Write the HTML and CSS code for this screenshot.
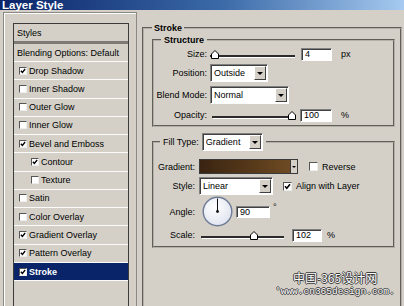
FILE: index.html
```html
<!DOCTYPE html>
<html lang="en">
<head>
    <meta charset="UTF-8">
    <meta name="viewport" content="width=device-width, initial-scale=1.0">
    <title>Layer Style</title>
    <link rel="stylesheet" href="styles.css">
</head>
<body>
<div class="window">
    <!-- title bar -->
    <div class="titlebar"><span class="title-text">Layer Style</span></div>

    <div class="dialog">
        <!-- styles list -->
        <div class="sidebar">
            <ul class="style-list">
                <li class="style-row style-head">Styles</li>
                <li class="style-row style-blend">Blending Options: Default</li>
                <li class="style-row"><span class="check"><svg viewBox="0 0 7 7"><polyline points="1,3.2 2.8,5.2 6,1.2"/></svg></span>Drop Shadow</li>
                <li class="style-row"><span class="check"></span>Inner Shadow</li>
                <li class="style-row"><span class="check"></span>Outer Glow</li>
                <li class="style-row"><span class="check"></span>Inner Glow</li>
                <li class="style-row"><span class="check"><svg viewBox="0 0 7 7"><polyline points="1,3.2 2.8,5.2 6,1.2"/></svg></span>Bevel and Emboss</li>
                <li class="style-row style-sub"><span class="check"><svg viewBox="0 0 7 7"><polyline points="1,3.2 2.8,5.2 6,1.2"/></svg></span>Contour</li>
                <li class="style-row style-sub"><span class="check"></span>Texture</li>
                <li class="style-row"><span class="check"></span>Satin</li>
                <li class="style-row"><span class="check"></span>Color Overlay</li>
                <li class="style-row"><span class="check"><svg viewBox="0 0 7 7"><polyline points="1,3.2 2.8,5.2 6,1.2"/></svg></span>Gradient Overlay</li>
                <li class="style-row"><span class="check"><svg viewBox="0 0 7 7"><polyline points="1,3.2 2.8,5.2 6,1.2"/></svg></span>Pattern Overlay</li>
                <li class="style-row selected"><span class="check"><svg viewBox="0 0 7 7"><polyline points="1,3.2 2.8,5.2 6,1.2"/></svg></span>Stroke</li>
            </ul>
        </div>

        <!-- stroke settings -->
        <div class="panel">
            <fieldset class="group group-stroke">
                <legend>Stroke</legend>

                <fieldset class="group group-structure">
                    <legend>Structure</legend>
                    <div class="field field-size">
                        <span class="field-label">Size:</span>
                        <svg class="slider" width="85" height="10">
                            <rect x="0" y="6" width="85" height="2" fill="#2b2b2b"/>
                            <rect x="1" y="8" width="84" height="1" fill="#fff"/>
                            <polygon points="1.5,9.5 1.5,5 5,1.5 8.5,5 8.5,9.5" fill="#fff" stroke="#000"/>
                        </svg>
                        <span class="num-input size-input">4</span>
                        <span class="unit">px</span>
                    </div>
                    <div class="field field-position">
                        <span class="field-label">Position:</span>
                        <div class="select position-select"><span class="select-value">Outside</span><span class="select-btn"></span></div>
                    </div>
                    <div class="field field-blend">
                        <span class="field-label">Blend Mode:</span>
                        <div class="select blend-select"><span class="select-value">Normal</span><span class="select-btn"></span></div>
                    </div>
                    <div class="field field-opacity">
                        <span class="field-label">Opacity:</span>
                        <svg class="slider opacity-slider" width="84" height="10">
                            <rect x="0" y="6" width="84" height="2" fill="#2b2b2b"/>
                            <rect x="1" y="8" width="83" height="1" fill="#fff"/>
                            <polygon points="76.5,9.5 76.5,5 80,1.5 83.5,5 83.5,9.5" fill="#fff" stroke="#000"/>
                        </svg>
                        <span class="num-input opacity-input">100</span>
                        <span class="unit">%</span>
                    </div>
                </fieldset>

                <fieldset class="group group-fill">
                    <legend>
                        <span class="legend-label">Fill Type:</span>
                        <div class="select fill-select"><span class="select-value">Gradient</span><span class="select-btn"></span></div>
                    </legend>
                    <div class="field field-gradient">
                        <span class="field-label">Gradient:</span>
                        <div class="gradient-pick"><span class="gradient-swatch"></span><span class="mini-btn"></span></div>
                        <span class="box-check reverse-check"></span>
                        <span class="check-text">Reverse</span>
                    </div>
                    <div class="field field-style">
                        <span class="field-label">Style:</span>
                        <div class="select style-select"><span class="select-value">Linear</span><span class="select-btn"></span></div>
                        <span class="box-check align-check"><svg viewBox="0 0 7 7"><polyline points="1,3.2 2.8,5.2 6,1.2"/></svg></span>
                        <span class="check-text">Align with Layer</span>
                    </div>
                    <div class="field field-angle">
                        <span class="field-label">Angle:</span>
                        <svg class="dial" width="31" height="31">
                            <defs>
                                <radialGradient id="dialFace" cx="40%" cy="35%" r="70%">
                                    <stop offset="0" stop-color="#ffffff"/>
                                    <stop offset="1" stop-color="#dfe3ef"/>
                                </radialGradient>
                            </defs>
                            <circle cx="15.5" cy="15.5" r="14.3" fill="url(#dialFace)" stroke="#6d7b96" stroke-width="1.4"/>
                            <line x1="15.5" y1="15.5" x2="15.5" y2="2.5" stroke="#111" stroke-width="1"/>
                            <circle cx="15.5" cy="15.5" r="1.4" fill="#111"/>
                        </svg>
                        <span class="num-input angle-input">90</span>
                        <span class="degree">°</span>
                    </div>
                    <div class="field field-scale">
                        <span class="field-label">Scale:</span>
                        <svg class="slider scale-slider" width="83" height="10">
                            <rect x="0" y="6" width="83" height="2" fill="#2b2b2b"/>
                            <rect x="1" y="8" width="82" height="1" fill="#fff"/>
                            <polygon points="49.5,9.5 49.5,5 53,1.5 56.5,5 56.5,9.5" fill="#fff" stroke="#000"/>
                        </svg>
                        <span class="num-input scale-input">102</span>
                        <span class="unit scale-unit">%</span>
                    </div>
                </fieldset>
            </fieldset>
        </div>
    </div>

    <!-- 水印 -->
    <div class="watermark">
        <div class="wm-cn">中国-365设计网</div>
        <div class="wm-url">'www.cn365design.com.</div>
    </div>
</div>
</body>
</html>
```

FILE: styles.css
```css
/* base */
* { margin: 0; padding: 0; box-sizing: border-box; }
body { width: 404px; height: 306px; overflow: hidden; background: #d4d0c8; color: #000; font-family: 'Liberation Sans', Arial, sans-serif; font-size: 9px; line-height: 10px; }
.window { position: relative; height: 306px; overflow: hidden; }

/* title bar */
.titlebar { position: relative; z-index: 1; height: 10px; background: linear-gradient(to right, #0a246a, #3b6aa8 55%, #a6caf0); }
.title-text { display: block; margin-left: 2px; color: #fff; font-size: 11.5px; font-weight: 700; line-height: 10px; }

.dialog { display: flex; height: 296px; padding-top: 2px; overflow: hidden; }

/* styles list */
.sidebar { width: 134px; margin-left: 3px; padding: 10px 7px 0 9px; border: 1px solid #8c8984; border-bottom: none; box-shadow: inset 1px 1px 0 #fff; }
.style-list { list-style: none; height: 100%; border: 1px solid #3c3c3c; border-bottom: none; }
.style-row { display: flex; align-items: center; height: 18.27px; padding-left: 5px; border-bottom: 1px solid #fbfbfa; white-space: nowrap; }
.style-head { height: 20px; padding-left: 3px; border-bottom: 3px solid #7e7b76; }
.style-blend { height: 18px; padding-left: 3px; }
.style-sub { padding-left: 17px; }
.style-row.selected { background: #0a246a; color: #fff; font-weight: 700; }

.check { display: flex; width: 8px; height: 8px; margin-right: 2px; background: #fff; border: 1px solid; border-color: #555 #eee #eee #555; }
.check svg, .box-check svg { width: 100%; height: 100%; fill: none; stroke: #000; stroke-width: 1.6; }

/* right panel */
.panel { flex: 1; padding: 11px 2px 0 5px; }
.group { border: 2px groove #b4b0a8; min-width: 0; }
.group > legend { margin-left: 7px; padding: 0 3px; font-weight: 700; line-height: 10px; }
.group-stroke { padding: 0 5px 60px 8px; }
.group-stroke > legend { margin-left: 0; padding: 0 2px; }
.group-structure { margin-top: 2px; padding-bottom: 3px; }
.group-fill { margin-top: 6px; padding-bottom: 4px; }
.group-fill > legend { display: flex; align-items: center; margin-left: 6px; font-weight: 400; }
.legend-label { margin-right: 3px; }

.field { display: flex; align-items: center; }
.field-label { width: 53px; margin-right: 3px; text-align: right; white-space: nowrap; }
.group-fill .field-label { width: 41px; margin-right: 4px; }

.field-size { height: 14px; margin-top: 2px; }
.field-position { height: 18px; margin-top: 3px; }
.field-blend { height: 18px; margin-top: 4px; }
.field-opacity { height: 14px; margin-top: 4px; }
.field-gradient { height: 15px; margin-top: 8px; }
.field-style { height: 18px; margin-top: 3px; }
.field-angle { height: 31px; margin-top: 1px; }
.field-scale { height: 14px; margin-top: 1px; }

/* inputs */
.num-input { height: 13px; padding-left: 3px; background: #fff; border: 1px solid; border-color: #808080 #fff #fff #808080; box-shadow: inset 1px 1px 0 #404040; line-height: 11px; }
.size-input { width: 31px; margin-left: 6px; }
.opacity-input { width: 32px; margin-left: 4px; }
.angle-input { width: 34px; height: 12px; margin-left: 3px; line-height: 10px; }
.scale-input { width: 30px; margin-left: 8px; }
.unit { margin-left: 9px; }
.scale-unit { margin-left: 5px; }
.degree { align-self: flex-start; margin: 6px 0 0 3px; }

.slider { display: block; }
.opacity-slider { margin-left: 2px; }
.scale-slider { margin-left: 2px; }
.dial { display: block; margin-left: 3px; }

/* dropdowns */
.select { display: flex; align-items: center; height: 18px; padding: 1px; background: #fff; border: 1px solid; border-color: #808080 #fff #fff #808080; box-shadow: inset 1px 1px 0 #404040; }
.select-value { flex: 1; padding-left: 2px; white-space: nowrap; }
.select-btn { display: flex; align-items: center; justify-content: center; width: 12px; height: 14px; background: #d4d0c8; border: 1px solid; border-color: #fff #404040 #404040 #fff; }
.select-btn::after { content: ""; border-left: 3px solid transparent; border-right: 3px solid transparent; border-top: 3px solid #000; }
.position-select { width: 58px; }
.blend-select { width: 79px; }
.fill-select { width: 61px; }
.style-select { width: 74px; }

/* gradient picker */
.gradient-pick { display: flex; width: 99px; height: 15px; border: 1px solid #3a3a3a; background: #d4d0c8; }
.gradient-swatch { flex: 1; border-right: 1px solid #3a3a3a; background: linear-gradient(to right, #3a2411, #553819 55%, #6e4b24); }
.mini-btn { display: flex; align-items: center; justify-content: center; width: 6px; }
.mini-btn::after { content: ""; border-left: 2px solid transparent; border-right: 2px solid transparent; border-top: 2px solid #000; }

.box-check { display: flex; width: 9px; height: 9px; background: #fff; border: 1px solid; border-color: #555 #eee #eee #555; }
.reverse-check { margin-left: 11px; }
.align-check { margin-left: 10px; }
.check-text { margin-left: 4px; white-space: nowrap; }

/* watermark */
.watermark { position: absolute; left: 275px; top: 271px; color: #fff; text-shadow: 1px 0 #3c3c3c, -1px 0 #3c3c3c, 0 1px #3c3c3c, 0 -1px #3c3c3c; }
.wm-cn { margin-left: 18px; font-family: 'Noto Sans CJK SC', sans-serif; font-size: 12px; line-height: 14px; }
.wm-url { margin-top: 1px; font-family: 'Liberation Mono', monospace; font-size: 9.5px; line-height: 12px; white-space: nowrap; }
```
